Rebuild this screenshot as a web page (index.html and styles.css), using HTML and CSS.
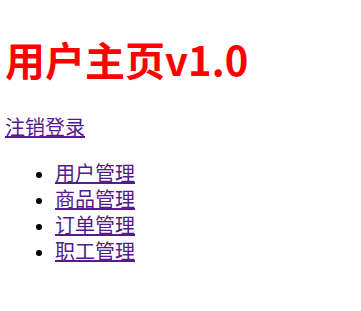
FILE: index.html
```html
<!DOCTYPE html>
<html lang="zh-CN">
<head>
<meta charset="utf-8">
<title>用户主页</title>
<link rel="stylesheet" href="styles.css">
</head>
<body class="page">
<h1 class="title">用户主页v1.0</h1>
<p class="logout"><a class="link" href="#">注销登录</a></p>
<ul class="menu">
  <li class="menu-item"><a class="link" href="#">用户管理</a></li>
  <li class="menu-item"><a class="link" href="#">商品管理</a></li>
  <li class="menu-item"><a class="link" href="#">订单管理</a></li>
  <li class="menu-item"><a class="link" href="#">职工管理</a></li>
</ul>
</body>
</html>
```

FILE: styles.css
```css
html, body {
  margin: 0;
  padding: 0;
  background: #fff;
}
.page {
  padding: 0 5px;
  font-family: "Noto Sans CJK SC", "Noto Sans", sans-serif;
  font-size: 20px;
  line-height: 26px;
  color: #000;
}
.title {
  margin: 33px 0 29px;
  font-size: 40px;
  line-height: 52px;
  font-weight: bold;
  color: #ff0000;
}
.logout {
  margin: 0;
}
.link {
  color: #551a8b;
  text-decoration: underline;
}
.menu {
  margin: 21px 0 0;
  padding-left: 50px;
  font-family: "Liberation Sans", "Noto Sans CJK SC", sans-serif;
}
.menu-item {
  line-height: 26px;
}
```
